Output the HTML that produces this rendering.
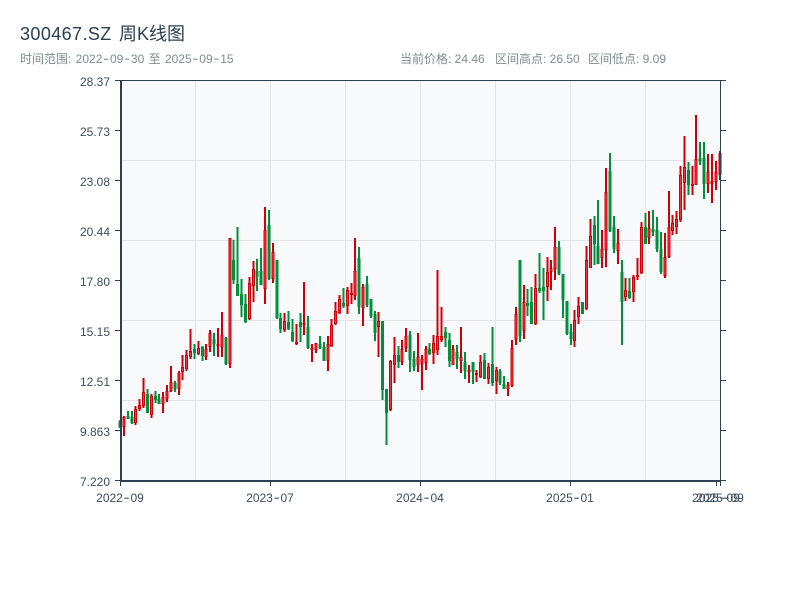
<!DOCTYPE html>
<html lang="zh">
<head>
<meta charset="utf-8">
<title>300467.SZ 周K线图</title>
<style>
html,body{margin:0;padding:0;background:#fff;width:800px;height:600px;overflow:hidden}
svg{display:block;position:absolute;left:0;top:0}
text{font-family:"Liberation Sans","Noto Sans CJK SC",sans-serif}
.t{font-size:18px;fill:#2c3e50}
.s{font-size:12px;fill:#7f8c8d}
.a{font-size:12px;fill:#3d4d5e}
.h{font-size:18px;fill-opacity:.75}
.c{shape-rendering:crispEdges;fill:none}
</style>
</head>
<body>
<svg width="800" height="600" viewBox="0 0 800 600" xmlns="http://www.w3.org/2000/svg">
<text class="t" x="20" y="40" letter-spacing=".4">300467.SZ</text>
<text class="t" x="119" y="40">周K线图</text>
<text class="s" x="20" y="63">时间范围: <tspan dx="1">2022</tspan><tspan class="h" dx=".8" dy=".8">-</tspan><tspan dx=".8" dy="-.8">09</tspan><tspan class="h" dx=".8" dy=".8">-</tspan><tspan dx=".8" dy="-.8">30</tspan><tspan dx="1"> 至</tspan><tspan dx="1"> 2025</tspan><tspan class="h" dx=".8" dy=".8">-</tspan><tspan dx=".8" dy="-.8">09</tspan><tspan class="h" dx=".8" dy=".8">-</tspan><tspan dx=".8" dy="-.8">15</tspan></text>
<text class="s" x="400" y="63">当前价格: 24.46</text>
<text class="s" x="495" y="63">区间高点: 26.50</text>
<text class="s" x="588" y="63">区间低点: 9.09</text>

<rect x="120" y="80" width="600" height="400" fill="#f8f9fa"/>
<path class="c" d="M195.5 80V480M270.5 80V480M345.5 80V480M420.5 80V480M495.5 80V480M570.5 80V480M645.5 80V480M120 160.5H720M120 240.5H720M120 320.5H720M120 400.5H720" stroke="#e2e4e9" stroke-width="1"/>

<!-- green wicks -->
<path class="c" stroke="#008f3a" stroke-width="2" d="M120 420V428M127.8 411V419M131.8 411V424M147.4 389V413M155.3 391V403M159.2 394V404M174.9 381V392M194.5 344V359M202.3 346V361M214.1 333V356M225.8 337V365M233.7 240V284M237.6 227V296M241.5 279V317M245.4 294V323M257.2 259V291M261.1 248V285M269 210V280M276.8 260V319M280.7 313V333M288.6 311V330M292.5 319V342M300.3 313V342M308.2 316V349M319.9 336V349M323.8 342V361M343.4 288V308M359.1 247V314M367 276V307M370.9 299V318M374.8 311V341M382.6 321V400M386.6 389V445M398.3 346V368M410.1 331V372M414 351V371M429.7 343V355M445.4 327V347M449.3 333V367M457.1 345V369M465 352V379M472.8 362V384M484.6 353V379M492.4 327V386M500.2 369V385M504.2 376V389M519.8 260V342M527.7 289V316M531.6 287V324M539.4 253V293M543.4 268V320M559 241V275M563 274V318M566.9 301V335M570.8 324V345M582.6 302V314M594.3 216V265M598.2 200V264M610 153V232M613.9 216V253M621.8 260V345M629.6 278V299M645.3 213V244M653.1 210V236M657 217V252M661 232V274M688.4 162V195M700.2 142V165M704.1 142V199"/>
<!-- green bodies -->
<path class="c" stroke="#008f3a" stroke-width="3" d="M120 421V428M127.8 416V419M131.8 417V423M147.4 394V413M155.3 396V400M159.2 399V404M174.9 383V389M194.5 349V353M202.3 347V356M214.1 339V344M225.8 338V364M233.7 260V280M237.6 284V296M241.5 294V305M245.4 304V322M257.2 271V277M261.1 271V285M269 225V279M276.8 260V318M280.7 318V329M288.6 322V329M292.5 332V341M300.3 322V327M308.2 327V348M319.9 344V348M323.8 347V361M343.4 303V306M359.1 258V307M367 284V305M370.9 299V316M374.8 314V333M382.6 321V390M386.6 389V413M398.3 355V362M410.1 335V360M414 359V367M429.7 349V354M445.4 332V338M449.3 340V361M457.1 352V359M465 362V371M472.8 362V372M484.6 360V379M492.4 364V383M500.2 371V383M504.2 384V389M519.8 260V336M527.7 303V306M531.6 302V324M539.4 288V291M543.4 287V291M559 247V274M563 274V300M566.9 301V334M570.8 332V339M582.6 302V314M594.3 225V244M598.2 246V264M610 171V231M613.9 227V249M621.8 272V302M629.6 291V298M645.3 227V244M653.1 229V232M657 230V249M661 249V272M688.4 170V185M700.2 158V161M704.1 158V184"/>
<!-- red wicks -->
<path class="c" stroke="#cf0008" stroke-width="2" d="M123.9 416V436M135.7 406V425M139.6 399V411M143.5 378V408M151.4 394V418M163.1 392V413M167 385V402M171 366V392M178.8 371V395M182.7 355V380M186.6 350V371M190.6 329V359M198.4 341V355M206.2 344V360M210.2 330V352M218 328V357M221.9 312V357M229.8 238V368M249.4 277V320M253.3 261V302M265 207V304M272.9 243V283M284.6 313V332M296.4 324V345M304.2 282V335M312.1 344V362M316 343V353M327.8 336V371M331.7 319V347M335.6 302V325M339.5 295V314M347.4 287V314M351.3 283V304M355.2 238V300M363 284V326M378.7 312V357M390.5 360V411M394.4 337V383M402.2 340V365M406.2 328V352M417.9 333V372M421.8 355V390M425.8 346V370M433.6 335V364M437.5 270V355M441.4 307V342M453.2 345V365M461 327V373M468.9 365V383M476.7 370V382M480.6 355V378M488.5 363V384M496.3 367V394M508.1 382V396M512 340V387M515.9 307V345M523.8 285V339M535.5 274V325M547.3 257V301M551.2 260V290M555.1 227V280M574.7 310V347M578.6 297V324M586.5 246V310M590.4 219V268M602.2 230V268M606.1 168V267M617.8 229V264M625.7 278V301M633.5 275V302M637.4 258V280M641.4 222V274M649.2 211V244M664.9 233V278M668.8 191V258M672.7 215V235M676.6 211V234M680.6 166V222M684.5 136V210M692.3 166V195M696.2 115V185M708 154V193M711.9 154V203M715.8 161V190M719.8 151V180"/>
<!-- red body outer -->
<path class="c" stroke="#cf0008" stroke-width="3" d="M123.9 417V427M135.7 409V423M139.6 405V409M143.5 392V406M151.4 396V415M163.1 397V404M167 391V399M171 382V391M178.8 373V389M182.7 367V372M186.6 355V369M190.6 351V357M198.4 348V354M206.2 349V357M210.2 333V347M218 344V346M221.9 335V347M229.8 238V364M249.4 283V319M253.3 269V286M265 230V289M272.9 252V279M284.6 321V330M296.4 342V344M304.2 323V325M312.1 348V350M316 343V350M327.8 344V361M331.7 325V346M335.6 311V324M339.5 299V313M347.4 290V306M351.3 293V295M355.2 271V296M363 287V308M378.7 321V327M390.5 361V410M394.4 355V365M402.2 349V362M406.2 336V348M417.9 357V365M421.8 359V364M425.8 349V363M433.6 343V353M437.5 336V350M441.4 336V340M453.2 349V365M461 357V361M468.9 370V372M476.7 373V375M480.6 362V377M488.5 367V379M496.3 370V381M508.1 385V389M512 348V386M515.9 314V340M523.8 302V331M535.5 288V324M547.3 272V287M551.2 268V272M555.1 247V269M574.7 320V341M578.6 306V317M586.5 260V309M590.4 236V268M602.2 249V258M606.1 192V250M617.8 243V251M625.7 290V297M633.5 277V292M637.4 275V277M641.4 227V273M649.2 228V238M664.9 257V276M668.8 227V257M672.7 223V231M676.6 219V227M680.6 175V220M684.5 167V183M692.3 184V186M696.2 159V185M708 172V184M711.9 181V184M715.8 172V182M719.8 153V175"/>
<!-- red body inner -->
<path class="c" stroke="#f5333a" stroke-width="1" d="M123.9 418V426M135.7 410V422M139.6 406V408M143.5 393V405M151.4 397V414M163.1 398V403M167 392V398M171 383V390M178.8 374V388M182.7 368V371M186.6 356V368M190.6 352V356M198.4 349V353M206.2 350V356M210.2 334V346M221.9 336V346M229.8 239V363M249.4 284V318M253.3 270V285M265 231V288M272.9 253V278M284.6 322V329M316 344V349M327.8 345V360M331.7 326V345M335.6 312V323M339.5 300V312M347.4 291V305M355.2 272V295M363 288V307M378.7 322V326M390.5 362V409M394.4 356V364M402.2 350V361M406.2 337V347M417.9 358V364M421.8 360V363M425.8 350V362M433.6 344V352M437.5 337V349M441.4 337V339M453.2 350V364M461 358V360M480.6 363V376M488.5 368V378M496.3 371V380M508.1 386V388M512 349V385M515.9 315V339M523.8 303V330M535.5 289V323M547.3 273V286M551.2 269V271M555.1 248V268M574.7 321V340M578.6 307V316M586.5 261V308M590.4 237V267M602.2 250V257M606.1 193V249M617.8 244V250M625.7 291V296M633.5 278V291M641.4 228V272M649.2 229V237M664.9 258V275M668.8 228V256M672.7 224V230M676.6 220V226M680.6 176V219M684.5 168V182M696.2 160V184M708 173V183M715.8 173V181"/>

<!-- axes -->
<path fill="none" stroke="#2c3e50" stroke-width="1" d="M115 80.5H726M720.5 80V486M115 130.5H120M115 180.5H120M115 230.5H120M115 280.5H120M115 330.5H120M115 380.5H120M115 430.5H120M721 130.5H726M721 180.5H726M721 230.5H726M721 280.5H726M721 330.5H726M721 380.5H726M721 430.5H726M115 480.5H120M721 480.5H726M120.5 482V486M270.5 482V486M420.5 482V486M570.5 482V486M716.5 482V486"/>
<path fill="none" stroke="#2c3e50" stroke-width="2" d="M121 80V482M120 481H721"/>

<!-- y labels -->
<g text-anchor="end">
<text class="a" x="110" y="86">28.37</text>
<text class="a" x="110" y="136">25.73</text>
<text class="a" x="110" y="186">23.08</text>
<text class="a" x="110" y="236">20.44</text>
<text class="a" x="110" y="286">17.80</text>
<text class="a" x="110" y="336">15.15</text>
<text class="a" x="110" y="386">12.51</text>
<text class="a" x="110" y="436">9.863</text>
<text class="a" x="110" y="486">7.220</text>
</g>
<!-- x labels -->
<g text-anchor="middle">
<text class="a" x="120" y="502">2022<tspan class="h" dx=".8" dy=".8">-</tspan><tspan dx=".8" dy="-.8">09</tspan></text>
<text class="a" x="270" y="502">2023<tspan class="h" dx=".8" dy=".8">-</tspan><tspan dx=".8" dy="-.8">07</tspan></text>
<text class="a" x="420" y="502">2024<tspan class="h" dx=".8" dy=".8">-</tspan><tspan dx=".8" dy="-.8">04</tspan></text>
<text class="a" x="570" y="502">2025<tspan class="h" dx=".8" dy=".8">-</tspan><tspan dx=".8" dy="-.8">01</tspan></text>
<text class="a" x="716" y="502">2025<tspan class="h" dx=".8" dy=".8">-</tspan><tspan dx=".8" dy="-.8">09</tspan></text>
<text class="a" x="720" y="502">2025<tspan class="h" dx=".8" dy=".8">-</tspan><tspan dx=".8" dy="-.8">09</tspan></text>
</g>
</svg>
</body>
</html>
